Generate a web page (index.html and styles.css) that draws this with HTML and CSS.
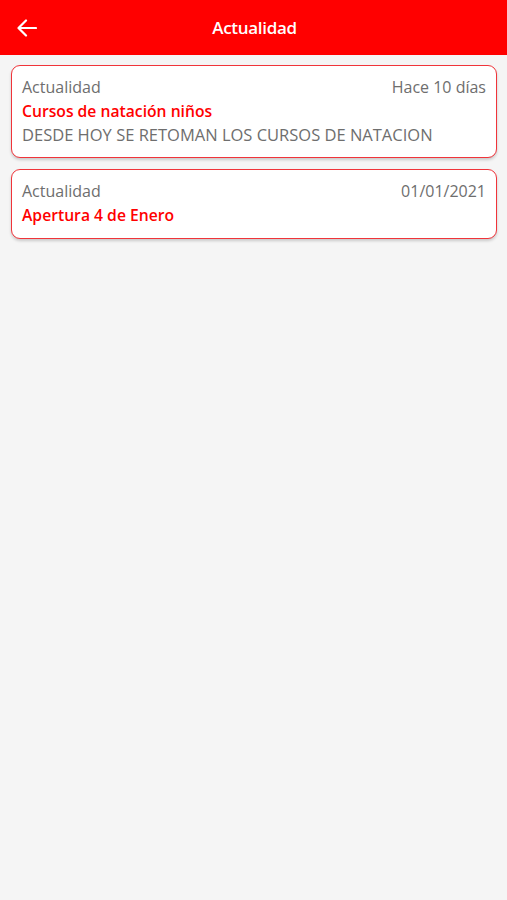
FILE: index.html
```html
<!DOCTYPE html>
<html lang="es">
<head>
  <meta charset="UTF-8" />
  <meta name="viewport" content="width=device-width, initial-scale=1.0" />
  <title>Actualidad</title>
  <link rel="stylesheet" href="styles.css">
</head>
<body>
  <header class="topbar">
    <button class="topbar__back" aria-label="Volver">
      <svg width="20" height="18" viewBox="0 0 20 18" fill="none" stroke="#fff" stroke-width="2.2" stroke-linecap="round" stroke-linejoin="round">
        <path d="M19 9H2M9 1.5L1.5 9L9 16.5"/>
      </svg>
    </button>
    <h1 class="topbar__title">Actualidad</h1>
  </header>

  <main class="news">
    <article class="news-card">
      <div class="news-card__meta">
        <span>Actualidad</span>
        <span>Hace 10 días</span>
      </div>
      <h2 class="news-card__title">Cursos de natación niños</h2>
      <p class="news-card__text">DESDE HOY SE RETOMAN LOS CURSOS DE NATACION</p>
    </article>

    <article class="news-card">
      <div class="news-card__meta">
        <span>Actualidad</span>
        <span>01/01/2021</span>
      </div>
      <h2 class="news-card__title">Apertura 4 de Enero</h2>
    </article>
  </main>
</body>
</html>
```

FILE: styles.css
```css
*{margin:0;padding:0;box-sizing:border-box;}
body{
  font-family:"Open Sans","Noto Sans",Arial,sans-serif;
  background:#f5f5f5;
  min-height:100vh;
}
.topbar{
  height:55px;background:#ff0000;color:#fff;
  display:flex;align-items:center;justify-content:center;
  position:relative;
}
.topbar__back{
  position:absolute;left:17px;top:19px;
  background:none;border:none;cursor:pointer;
  display:flex;
}
.topbar__title{font-size:17px;font-weight:600;letter-spacing:-0.3px;padding-left:2px;}
.news{
  padding:10px 10px 0 11px;
  display:flex;flex-direction:column;gap:11px;
}
.news-card{
  background:#fff;
  border:1.5px solid #f0343a;
  border-radius:9px;
  box-shadow:0 2px 3px rgba(0,0,0,0.18);
  padding:9px 10px 11px 10px;
  font-size:16px;line-height:24px;
}
.news-card__meta{
  display:flex;justify-content:space-between;
  color:#6e6e6e;
}
.news-card__title{
  font-size:15.7px;font-weight:600;color:#ff0000;line-height:24px;
}
.news-card__text{color:#6e6e6e;font-size:16.5px;line-height:23px;}
```
